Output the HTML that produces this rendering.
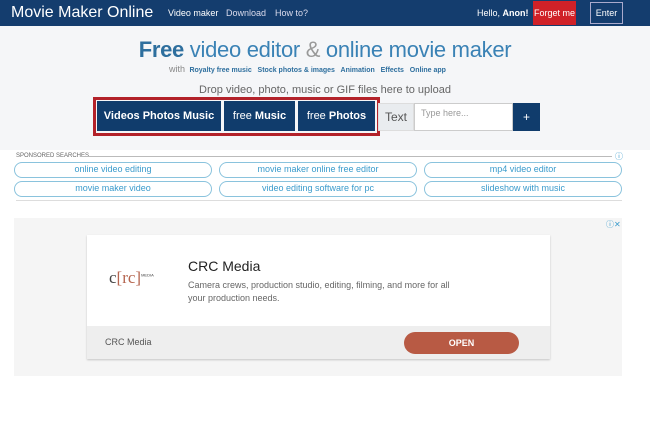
<!DOCTYPE html><html><head><meta charset="utf-8"><style>
*{box-sizing:border-box;margin:0;padding:0}
body{width:650px;height:430px;background:#fff;font-family:"Liberation Sans",sans-serif;position:relative;overflow:hidden}
.a{position:absolute;white-space:nowrap}
.nav{left:0;top:0;width:650px;height:26px;background:#143d6e;color:#fff}
.top{left:0;top:26px;width:650px;height:124px;background:#f5f6f8}
.btn{background:#103c6c;color:#fff;font-size:11px;height:30px;line-height:30px;text-align:center;top:101px}
.pill{height:16px;border:1px solid #8ac3dd;border-radius:8px;color:#3a9bcc;font-size:9px;text-align:center;line-height:13px;background:#fff}
</style></head><body>
<div class="a nav">
<div class="a" style="left:11px;top:4px;font-size:16px">Movie Maker Online</div>
<div class="a" style="left:168px;top:8px;font-size:9px">Video maker</div>
<div class="a" style="left:226px;top:8px;font-size:9px;color:#dde">Download</div>
<div class="a" style="left:275px;top:8px;font-size:9px;color:#dde">How to?</div>
<div class="a" style="left:477px;top:8px;font-size:9px">Hello, <b>Anon!</b></div>
<div class="a" style="left:533px;top:1px;width:43px;height:24px;background:#d02128;font-size:9px;line-height:24px;text-align:center">Forget me</div>
<div class="a" style="left:590px;top:2px;width:33px;height:22px;border:1px solid #aac;font-size:9px;line-height:20px;text-align:center">Enter</div>
</div>
<div class="a top"></div>
<div class="a" style="left:0;width:650px;top:37px;text-align:center;font-size:22px;color:#3a82b5;letter-spacing:-0.3px"><b style="color:#2e6f9e">Free</b> video editor <span style="color:#999">&amp;</span> online movie maker</div>
<div class="a" style="left:169px;top:64px;font-size:9px;color:#888">with <span style="color:#2e6f9e;font-size:7px;font-weight:bold">&nbsp;Royalty free music &nbsp; Stock photos &amp; images &nbsp; Animation &nbsp; Effects &nbsp; Online app</span></div>
<div class="a" style="left:0;width:650px;top:84px;text-align:center;font-size:11px;color:#666">Drop video, photo, music or GIF files here to upload</div>
<div class="a" style="left:93px;top:97px;width:287px;height:39px;border:3px solid #b3222a"></div>
<div class="a btn" style="left:97px;width:124px;font-weight:bold">Videos Photos Music</div>
<div class="a btn" style="left:224px;width:71px">free <b>Music</b></div>
<div class="a btn" style="left:298px;width:77px">free <b>Photos</b></div>
<div class="a" style="left:378px;top:103px;width:36px;height:28px;background:#e9ecef;border:1px solid #ddd;font-size:12px;color:#555;line-height:26px;text-align:center">Text</div>
<div class="a" style="left:414px;top:103px;width:99px;height:28px;background:#fff;border:1px solid #ccc;font-size:9px;color:#999;padding:4px 6px">Type here...</div>
<div class="a btn" style="left:513px;top:103px;width:27px;height:28px;line-height:28px;font-size:12px">+</div>
<div class="a" style="left:16px;top:153px;font-size:6px;color:#666">SPONSORED SEARCHES</div>
<div class="a" style="left:80px;top:156px;width:532px;height:1px;background:#bbb"></div>
<div class="a" style="left:615px;top:151px;font-size:8px;color:#3a9bcc">ⓘ</div>
<div class="a pill" style="left:14px;top:162px;width:198px">online video editing</div>
<div class="a pill" style="left:219px;top:162px;width:198px">movie maker online free editor</div>
<div class="a pill" style="left:424px;top:162px;width:198px">mp4 video editor</div>
<div class="a pill" style="left:14px;top:181px;width:198px">movie maker video</div>
<div class="a pill" style="left:219px;top:181px;width:198px">video editing software for pc</div>
<div class="a pill" style="left:424px;top:181px;width:198px">slideshow with music</div>
<div class="a" style="left:16px;top:200px;width:606px;height:1px;background:#ddd"></div>
<div class="a" style="left:14px;top:218px;width:608px;height:158px;background:#f5f5f5"></div>
<div class="a" style="left:606px;top:219px;font-size:8px;color:#3a9bcc">ⓘ✕</div>
<div class="a" style="left:87px;top:235px;width:463px;height:124px;background:#fff;box-shadow:0 1px 2px rgba(0,0,0,.2)"></div>
<div class="a" style="left:87px;top:326px;width:463px;height:33px;background:#eee"></div>
<div class="a" style="left:109px;top:268px;font-family:'Liberation Serif',serif;font-size:17px;color:#444">c<span style="color:#b5654f">[rc]</span><sup style="font-size:4px;font-family:'Liberation Sans'">MEDIA</sup></div>
<div class="a" style="left:188px;top:258px;font-size:14px;color:#222">CRC Media</div>
<div class="a" style="left:188px;top:279px;font-size:9px;color:#666;line-height:13px;width:270px;white-space:normal">Camera crews, production studio, editing, filming, and more for all your production needs.</div>
<div class="a" style="left:105px;top:337px;font-size:9px;color:#555">CRC Media</div>
<div class="a" style="left:404px;top:332px;width:115px;height:22px;border-radius:11px;background:#b85a44;color:#fff;font-size:9px;font-weight:bold;line-height:22px;text-align:center">OPEN</div>
</body></html>
